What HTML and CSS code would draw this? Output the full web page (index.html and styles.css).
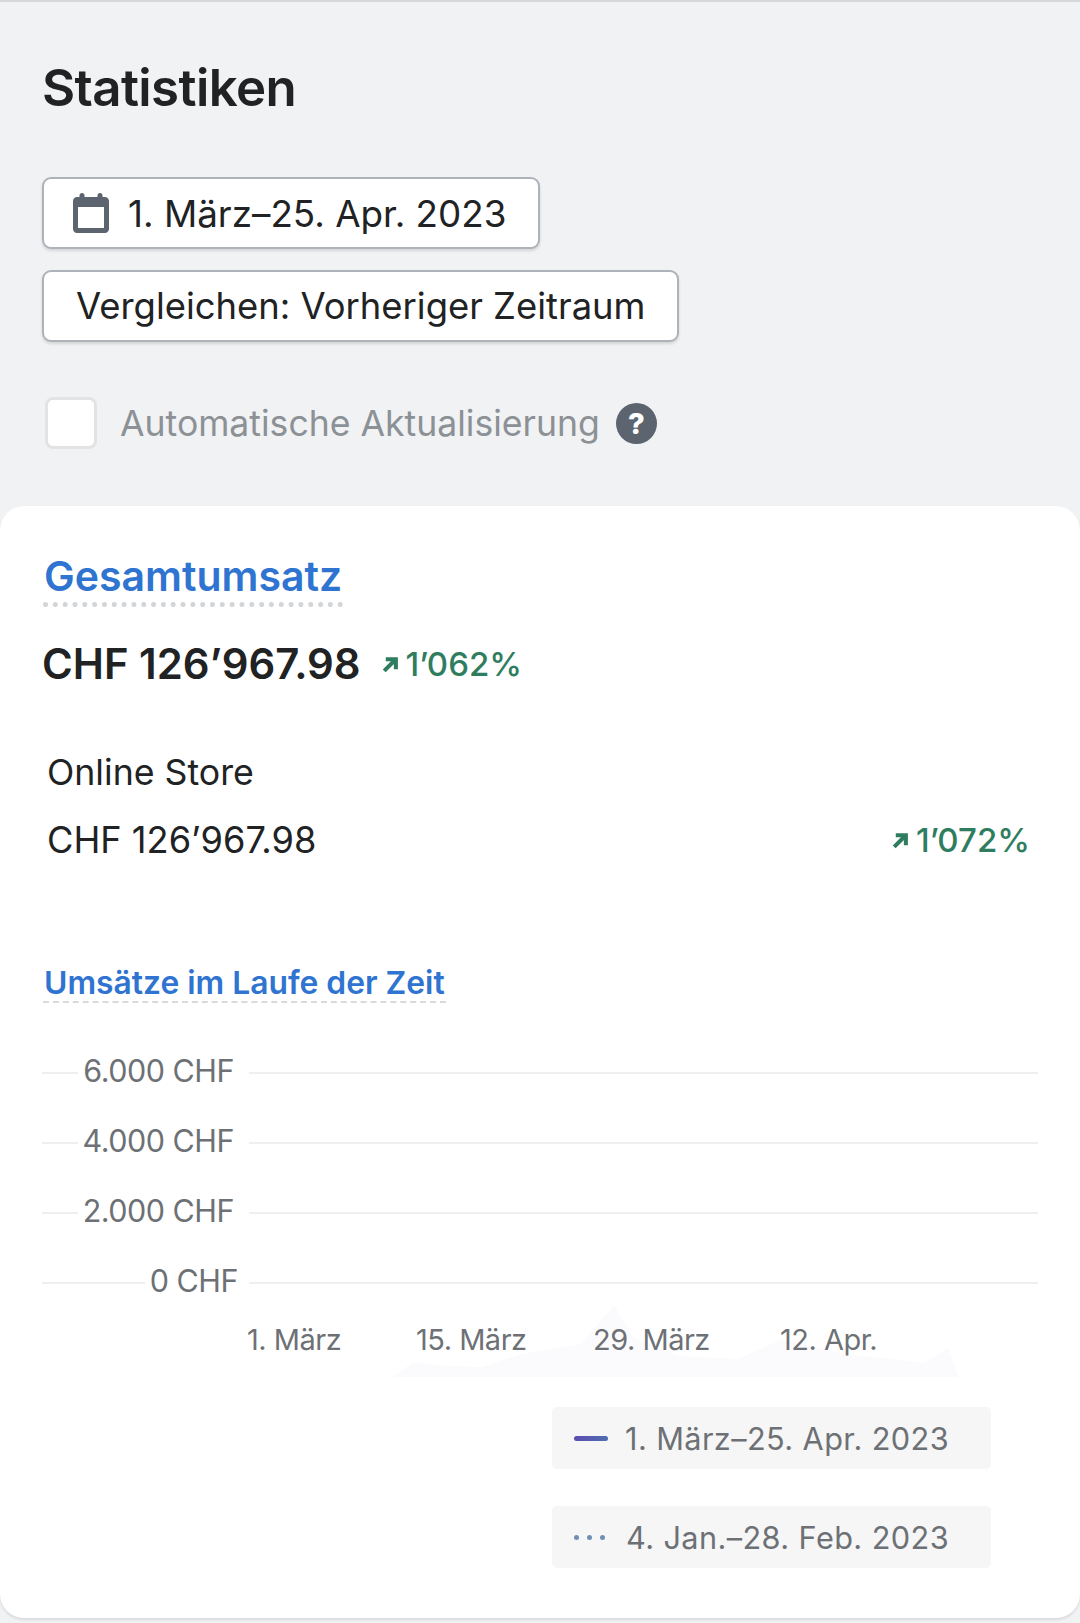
FILE: index.html
```html
<!DOCTYPE HTML><html>
<head>
  <title>Statistiken</title>
  <meta name="viewport" content="width=device-width, initial-scale=1">
  <meta charset="UTF-8">
  <link rel="stylesheet" href="styles.css">
</head>
<body>
  <div class="top">
    <h1 class="title">Statistiken</h1>
    <button class="btn btn-date">
      <svg class="cal" viewBox="0 0 36 40"><path fill="#5c6470" d="M9 0c1.5 0 2.5 1 2.5 2.5V4h13V2.500C24.500 1 25.500 0 27 0s2.500 1 2.500 2.500V4H32c2.200 0 4 1.800 4 4v28c0 2.200-1.800 4-4 4H4c-2.200 0-4-1.800-4-4V8c0-2.200 1.800-4 4-4h2.500V2.500C6.500 1 7.500 0 9 0zM5 14v21h26V14z"/></svg>
      1. März–25. Apr. 2023
    </button>
    <button class="btn btn-compare">Vergleichen: Vorheriger Zeitraum</button>
    <div class="auto">
      <span class="check"></span>
      <span class="auto-label">Automatische Aktualisierung</span>
      <span class="help">?</span>
    </div>
  </div>

  <div class="card">
    <div class="total-head"><span class="total-title">Gesamtumsatz</span></div>
    <div class="total-row">
      <span class="total-value">CHF 126’967.98</span>
      <span class="trend trend-big">
        <svg class="arrow" viewBox="0 0 16 16"><path fill="none" stroke="#2f7d5f" stroke-width="3.800" d="M3 14L13 4M4.500 3h9.500v9.500"/></svg>
        1’062%
      </span>
    </div>
    <div class="store-name">Online Store</div>
    <div class="store-row">
      <span>CHF 126’967.98</span>
      <span class="trend">
        <svg class="arrow" viewBox="0 0 16 16"><path fill="none" stroke="#2f7d5f" stroke-width="3.800" d="M3 14L13 4M4.500 3h9.500v9.500"/></svg>
        1’072%
      </span>
    </div>
    <div class="chart-head"><span class="chart-title">Umsätze im Laufe der Zeit</span></div>

    <div class="chart">
      <div class="grid-row"><span class="tick">6.000 CHF</span></div>
      <div class="grid-row"><span class="tick">4.000 CHF</span></div>
      <div class="grid-row"><span class="tick">2.000 CHF</span></div>
      <div class="grid-row"><span class="tick tick-zero">0 CHF</span></div>
      <div class="x-axis">
        <svg class="ghost" viewBox="0 0 600 90" preserveAspectRatio="none"><path fill="#fbfbfe" d="M0 90L20 72 50 76 90 78 130 62 190 50 225 2 245 42 290 64 350 68 395 44 460 62 540 72 565 54 575 90z"/></svg>
        <span class="x-label x1">1. März</span>
        <span class="x-label x2">15. März</span>
        <span class="x-label x3">29. März</span>
        <span class="x-label x4">12. Apr.</span>
      </div>
    </div>

    <div class="legend">
      <div class="legend-item"><span class="dash"></span>1. März–25. Apr. 2023</div>
      <div class="legend-item"><span class="dots"><i></i><i></i><i></i></span>4. Jan.–28. Feb. 2023</div>
    </div>
  </div>
</body>
</html>
```

FILE: styles.css
```css
html, body {margin: 0; padding: 0;}
body {
	width: 1080px;
	height: 1623px;
	overflow: hidden;
	background-color: #f1f2f4;
	border-top: 2px solid #d5d7db;
	box-sizing: border-box;
	font-family: Inter, "Liberation Sans", sans-serif;
	color: #202223;
}

.top {
	padding: 0 42px;
	height: 504px;
}

.title {
	margin: 0;
	padding-top: 54px;
	font-size: 51px;
	line-height: 64px;
	font-weight: 600;
	letter-spacing: -0.6px;
}

.btn {
	display: flex;
	align-items: center;
	background-color: #fff;
	border: 2px solid #aeb3ba;
	border-radius: 9px;
	box-shadow: 0 2px 3px rgba(0,0,0,.12);
	font-family: inherit;
	font-size: 36.4px;
	color: #202223;
	padding: 0;
	box-sizing: border-box;
	height: 72px;
}

.btn-date {
	width: 498px;
	margin-top: 57px;
	padding-left: 29px;
	font-size: 36.8px;
}

.cal {
	width: 36px;
	height: 40px;
	margin-right: 19px;
}

.btn-compare {
	width: 637px;
	margin-top: 21px;
	padding-left: 32px;
	white-space: nowrap;
}

.auto {
	display: flex;
	align-items: center;
	margin-top: 55px;
	padding-left: 3px;
}

.check {
	width: 52px;
	height: 52px;
	box-sizing: border-box;
	background-color: #fff;
	border: 3px solid #e2e3e5;
	border-radius: 8px;
}

.auto-label {
	margin-left: 23px;
	font-size: 35.6px;
	color: #8c9196;
}

.help {
	width: 41px;
	height: 41px;
	margin-left: 16px;
	border-radius: 50%;
	background-color: #5c6470;
	color: #fff;
	font-size: 29px;
	font-weight: 800;
	line-height: 41px;
	text-align: center;
}

.card {
	background-color: #fff;
	border-radius: 24px;
	height: 1112px;
	box-shadow: 0 2px 3px rgba(0,0,0,.1);
	padding: 1px 42px 0;
	box-sizing: border-box;
}

.total-head {
	margin-top: 44px;
	height: 54px;
}

.total-title {
	display: inline-block;
	margin-left: 1px;
	padding: 0 1px 1px;
	font-size: 41px;
	line-height: 50px;
	font-weight: 600;
	color: #2f74d0;
	border-bottom: 5px dotted #d2d5d8;
}

.total-row {
	display: flex;
	align-items: center;
	margin-top: 34px;
}

.total-value {
	font-size: 41.8px;
	line-height: 50px;
	font-weight: 600;
}

.trend {
	display: flex;
	align-items: center;
	font-size: 33px;
	font-weight: 500;
	color: #2f7d5f;
}

.trend-big {
	margin-left: 20px;
}

.arrow {
	width: 17px;
	height: 17px;
	margin-right: 8px;
}

.store-name {
	margin: 61px 0 0 5px;
	font-size: 35.7px;
	line-height: 44px;
}

.store-row {
	display: flex;
	justify-content: space-between;
	align-items: center;
	margin: 24px 8px 0 5px;
	font-size: 36.2px;
	line-height: 44px;
}

.chart-head {
	margin-top: 102px;
	height: 44px;
}

.chart-title {
	display: inline-block;
	margin-left: 1px;
	padding: 0 1px;
	font-size: 31.8px;
	line-height: 37px;
	font-weight: 600;
	color: #2f74d0;
	border-bottom: 2px dashed #d8dadd;
}

.chart {
	margin-top: 30px;
	width: 996px;
}

.grid-row {
	display: flex;
	align-items: center;
	height: 70px;
	background: linear-gradient(#eeeff0, #eeeff0) left center / 100% 2px no-repeat;
}

/* white box cuts the grid line behind the label */
.tick {
	width: 171px;
	margin-left: 36px;
	margin-bottom: 5px;
	padding-right: 15px;
	box-sizing: border-box;
	text-align: right;
	background-color: #fff;
	font-size: 30.5px;
	letter-spacing: -0.5px;
	color: #6d7175;
}

.tick-zero {
	width: 104px;
	margin-left: 103px;
	padding-right: 11px;
}

.x-axis {
	position: relative;
	display: flex;
	height: 44px;
	padding-left: 205px;
	align-items: flex-end;
}

.ghost {
	position: absolute;
	left: 351px;
	top: -14px;
	width: 590px;
	height: 73px;
}

.x-label {
	position: relative;
	font-size: 29px;
	line-height: 36px;
	letter-spacing: -0.5px;
	color: #6d7175;
	margin-bottom: 4px;
}

.x1 {width: 169px;}
.x2 {width: 177px;}
.x3 {width: 187px;}

.legend {
	margin: 45px 0 0 510px;
	width: 439px;
}

.legend-item {
	display: flex;
	align-items: center;
	justify-content: flex-end;
	height: 62px;
	padding-right: 42px;
	margin-bottom: 37px;
	background-color: #f6f6f7;
	border-radius: 5px;
	font-size: 30.7px;
	letter-spacing: 0.4px;
	color: #6d7175;
	position: relative;
}

.dash {
	position: absolute;
	left: 22px;
	width: 34px;
	height: 5px;
	border-radius: 3px;
	background: linear-gradient(90deg, #5e4db2, #4f6db0);
}

.dots {
	position: absolute;
	left: 22px;
	display: flex;
	gap: 8px;
}

.dots i {
	width: 5px;
	height: 5px;
	border-radius: 50%;
	background-color: #6f8fb5;
}
```
